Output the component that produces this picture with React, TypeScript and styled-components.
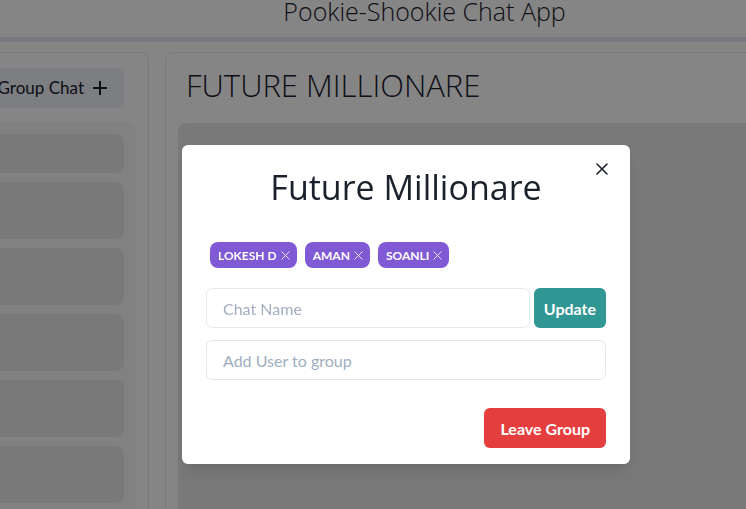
import styled, { createGlobalStyle } from 'styled-components';

const GlobalStyle = createGlobalStyle`
  html, body {
    margin: 0;
    padding: 0;
    overflow: hidden;
    background: #ffffff;
    font-family: Lato, "Open Sans", sans-serif;
    color: #1a202c;
  }
  * {
    box-sizing: border-box;
  }
`;

const Page = styled.div`
  width: 746px;
  height: 509px;
  overflow: hidden;
`;

const TopBar = styled.header`
  display: flex;
  justify-content: center;
  align-items: flex-start;
  height: 42px;
  padding-left: 103px;
  background: #ffffff;
  border-bottom: 5px solid #e2e8f0;
`;

const AppTitle = styled.h1`
  margin: 0;
  font-family: "Open Sans", sans-serif;
  font-weight: 300;
  font-size: 25px;
  line-height: 22px;
  color: #1a202c;
`;

const Main = styled.main`
  display: flex;
  gap: 16px;
  padding: 10px 0;
`;

const Card = styled.section<{ $width: number; $shift?: number }>`
  display: flex;
  flex-direction: column;
  flex: 0 0 ${(p) => p.$width}px;
  margin-left: ${(p) => p.$shift ?? 0}px;
  height: 500px;
  padding: 12px;
  background: #ffffff;
  border: 1px solid #e2e8f0;
  border-radius: 8px;
`;

const SideHeader = styled.div`
  display: flex;
  justify-content: flex-end;
  align-items: center;
  height: 45px;
  padding: 0 12px;
  margin-bottom: 12px;
`;

const GhostButton = styled.button`
  display: flex;
  align-items: center;
  gap: 8px;
  height: 40px;
  padding: 0 16px;
  border: none;
  border-radius: 6px;
  background: #edf2f7;
  color: #1a202c;
  font-family: Lato, sans-serif;
  font-weight: 400;
  font-size: 17px;
  white-space: nowrap;
`;

const ChatList = styled.div`
  display: flex;
  flex-direction: column;
  gap: 9px;
  flex: 1;
  padding: 12px;
  background: #f8f8f8;
  border-radius: 8px;
  overflow: hidden;
`;

const ChatItem = styled.div<{ $h: number }>`
  flex: 0 0 ${(p) => p.$h}px;
  background: #e8e8e8;
  border-radius: 8px;
`;

const ChatHeading = styled.div`
  display: flex;
  align-items: flex-start;
  height: 46px;
  padding: 0 8px;
  margin-bottom: 12px;
`;

const ChatName = styled.h2`
  margin: 0;
  font-family: "Open Sans", sans-serif;
  font-weight: 300;
  font-size: 31px;
  line-height: 40px;
  color: #1a202c;
`;

const ChatBox = styled.div`
  flex: 1;
  background: #e8e8e8;
  border-radius: 8px;
`;

const Overlay = styled.div`
  position: fixed;
  inset: 0;
  background: rgba(0, 0, 0, 0.48);
`;

const Dialog = styled.div`
  position: absolute;
  left: 182px;
  top: 145px;
  width: 448px;
  background: #ffffff;
  border-radius: 6px;
  box-shadow: 0 10px 15px -3px rgba(0, 0, 0, 0.1), 0 4px 6px -2px rgba(0, 0, 0, 0.05);
`;

const DialogHeader = styled.div`
  display: flex;
  justify-content: center;
  padding: 16px 24px;
`;

const DialogTitle = styled.h3`
  margin: 0;
  font-family: "Open Sans", sans-serif;
  font-weight: 400;
  font-size: 34px;
  line-height: 52px;
  color: #1a202c;
`;

const CloseButton = styled.button`
  position: absolute;
  top: 8px;
  right: 12px;
  width: 32px;
  height: 32px;
  display: flex;
  align-items: center;
  justify-content: center;
  padding: 0;
  border: none;
  border-radius: 6px;
  background: transparent;
  color: #1a202c;
`;

const DialogBody = styled.div`
  display: flex;
  flex-direction: column;
  padding: 13px 24px 8px;
`;

const BadgeRow = styled.div`
  display: flex;
  flex-wrap: wrap;
  padding-bottom: 16px;
`;

const Badge = styled.span`
  display: inline-flex;
  align-items: center;
  gap: 4px;
  height: 26px;
  margin: 0 4px 4px;
  padding: 0 7px 0 8px;
  border-radius: 8px;
  background: #805ad5;
  color: #ffffff;
  font-family: Lato, sans-serif;
  font-weight: 700;
  font-size: 12px;
  text-transform: uppercase;
`;

const FieldRow = styled.div<{ $gap?: number }>`
  display: flex;
  gap: 4px;
  margin-bottom: ${(p) => p.$gap ?? 0}px;
`;

const TextInput = styled.input`
  flex: 1;
  min-width: 0;
  height: 40px;
  padding: 0 16px;
  border: 1px solid #e2e8f0;
  border-radius: 6px;
  font-family: Lato, sans-serif;
  font-size: 16px;
  color: #1a202c;
  outline: none;
  &::placeholder {
    color: #a0aec0;
  }
`;

const SolidButton = styled.button<{ $bg: string; $pad?: number }>`
  height: 40px;
  padding: 0 ${(p) => p.$pad ?? 16}px;
  border: none;
  border-radius: 6px;
  background: ${(p) => p.$bg};
  color: #ffffff;
  font-family: Lato, sans-serif;
  font-weight: 700;
  font-size: 16px;
  white-space: nowrap;
`;

const DialogFooter = styled.div`
  display: flex;
  justify-content: flex-end;
  padding: 16px 24px;
`;

const PlusIcon = () => (
  <svg width="16" height="16" viewBox="0 0 16 16" fill="none">
    <path d="M8 1v14M1 8h14" stroke="currentColor" strokeWidth="2" />
  </svg>
);

const CrossIcon = ({ size, stroke }: { size: number; stroke: number }) => (
  <svg width={size} height={size} viewBox="0 0 12 12" fill="none">
    <path d="M1 1l10 10M11 1L1 11" stroke="currentColor" strokeWidth={stroke} strokeLinecap="round" />
  </svg>
);

const members = ['Lokesh D', 'Aman', 'Soanli'];
const chatHeights = [39, 57, 57, 57, 57, 57, 57];

export default function App() {
  return (
    <Page>
      <GlobalStyle />
      <TopBar>
        <AppTitle>Pookie-Shookie Chat App</AppTitle>
      </TopBar>
      <Main>
        <Card $width={320} $shift={-171}>
          <SideHeader>
            <GhostButton>
              New Group Chat
              <PlusIcon />
            </GhostButton>
          </SideHeader>
          <ChatList>
            {chatHeights.map((h, i) => (
              <ChatItem key={i} $h={h} />
            ))}
          </ChatList>
        </Card>
        <Card $width={640}>
          <ChatHeading>
            <ChatName>FUTURE MILLIONARE</ChatName>
          </ChatHeading>
          <ChatBox />
        </Card>
      </Main>
      <Overlay>
        <Dialog>
          <DialogHeader>
            <DialogTitle>Future Millionare</DialogTitle>
          </DialogHeader>
          <CloseButton aria-label="Close">
            <CrossIcon size={12} stroke={1.6} />
          </CloseButton>
          <DialogBody>
            <BadgeRow>
              {members.map((m) => (
                <Badge key={m}>
                  {m}
                  <CrossIcon size={9} stroke={1.1} />
                </Badge>
              ))}
            </BadgeRow>
            <FieldRow $gap={12}>
              <TextInput placeholder="Chat Name" />
              <SolidButton $bg="#319795" $pad={10}>
                Update
              </SolidButton>
            </FieldRow>
            <FieldRow $gap={4}>
              <TextInput placeholder="Add User to group" />
            </FieldRow>
          </DialogBody>
          <DialogFooter>
            <SolidButton $bg="#e53e3e">Leave Group</SolidButton>
          </DialogFooter>
        </Dialog>
      </Overlay>
    </Page>
  );
}
